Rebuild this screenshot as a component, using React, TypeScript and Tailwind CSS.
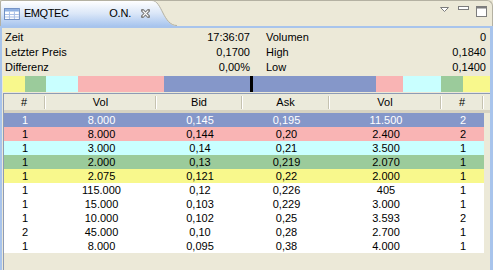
import React from "react";

type Row = {
  n1: string;
  vol1: string;
  bid: string;
  ask: string;
  vol2: string;
  n2: string;
  bg: string;
  text: string;
};

const rows: Row[] = [
  { n1: "1", vol1: "8.000", bid: "0,145", ask: "0,195", vol2: "11.500", n2: "2", bg: "bg-[#8597c9]", text: "text-white" },
  { n1: "1", vol1: "8.000", bid: "0,144", ask: "0,20", vol2: "2.400", n2: "2", bg: "bg-[#f9b4b4]", text: "text-black" },
  { n1: "1", vol1: "3.000", bid: "0,14", ask: "0,21", vol2: "3.500", n2: "1", bg: "bg-[#c9ffff]", text: "text-black" },
  { n1: "1", vol1: "2.000", bid: "0,13", ask: "0,219", vol2: "2.070", n2: "1", bg: "bg-[#9bcb9b]", text: "text-black" },
  { n1: "1", vol1: "2.075", bid: "0,121", ask: "0,22", vol2: "2.000", n2: "1", bg: "bg-[#f8f88c]", text: "text-black" },
  { n1: "1", vol1: "115.000", bid: "0,12", ask: "0,226", vol2: "405", n2: "1", bg: "bg-white", text: "text-black" },
  { n1: "1", vol1: "15.000", bid: "0,103", ask: "0,229", vol2: "3.000", n2: "1", bg: "bg-white", text: "text-black" },
  { n1: "1", vol1: "10.000", bid: "0,102", ask: "0,25", vol2: "3.593", n2: "2", bg: "bg-white", text: "text-black" },
  { n1: "2", vol1: "45.000", bid: "0,10", ask: "0,28", vol2: "2.700", n2: "1", bg: "bg-white", text: "text-black" },
  { n1: "1", vol1: "8.000", bid: "0,095", ask: "0,38", vol2: "4.000", n2: "1", bg: "bg-white", text: "text-black" },
];

// column widths in px: #, Vol, Bid, Ask, Vol, #
const cols = [
  { label: "#", w: "w-[42px]" },
  { label: "Vol", w: "w-[111px]" },
  { label: "Bid", w: "w-[86px]" },
  { label: "Ask", w: "w-[87px]" },
  { label: "Vol", w: "w-[112px]" },
  { label: "#", w: "w-[42px]" },
];

const info = [
  { l: "Zeit", lv: "17:36:07", r: "Volumen", rv: "0" },
  { l: "Letzter Preis", lv: "0,1700", r: "High", rv: "0,1840" },
  { l: "Differenz", lv: "0,00%", r: "Low", rv: "0,1400" },
];

const TableIcon = () => (
  <svg width="16" height="12" viewBox="0 0 16 12">
    <rect x="0.5" y="0.5" width="15" height="11" fill="#ffffff" stroke="#6f8fc4" />
    <rect x="1" y="1" width="14" height="2.5" fill="#8fb0e2" />
    <path d="M1 6.5H15M1 9H15M5.5 3.5V11M10.5 3.5V11" stroke="#a9c0e6" strokeWidth="1" />
  </svg>
);

const CloseIcon = () => (
  <svg width="9" height="9" viewBox="0 0 9 9">
    <path d="M1.5 1.5L7.5 7.5M7.5 1.5L1.5 7.5" stroke="#7d7d7d" strokeWidth="3.2" strokeLinecap="square" />
    <path d="M1.7 1.7L7.3 7.3M7.3 1.7L1.7 7.3" stroke="#ffffff" strokeWidth="1.2" />
  </svg>
);

export default function App() {
  return (
    <div className="w-[493px] h-[270px] bg-[#ece9d8] flex flex-col overflow-hidden font-['Liberation_Sans',Arial,sans-serif] text-[11px] text-black">
      {/* tab strip */}
      <div className="h-[26px] flex shrink-0">
        <div className="w-[150px] flex items-center pl-[3px] border-l border-t border-[#b4b1a2] rounded-tl-[2px] bg-gradient-to-b from-[#ffffff] via-[#dbe7f8] to-[#a8c5ee]">
          <TableIcon />
          <span className="ml-[4px] w-[86px] tracking-[-0.4px] text-[11px]">EMQTEC</span>
          <span className="tracking-[-0.2px]">O.N.</span>
          <span className="ml-[10px] flex">
            <CloseIcon />
          </span>
        </div>
        <svg width="27" height="26" viewBox="0 0 27 26" className="shrink-0">
          <defs>
            <linearGradient id="tabg" x1="0" y1="0" x2="0" y2="1">
              <stop offset="0" stopColor="#ffffff" />
              <stop offset="0.5" stopColor="#dbe7f8" />
              <stop offset="1" stopColor="#a8c5ee" />
            </linearGradient>
          </defs>
          <rect width="27" height="26" fill="#ece9d8" />
          <path d="M0 0 L2 0 C12 0 13 26 27 26 L0 26 Z" fill="url(#tabg)" />
          <path d="M0 0.5 L2 0.5 C12 0.5 13 25.5 27 25.5" fill="none" stroke="#b4b1a2" />
          <path d="M2 0.5 L27 0.5" stroke="#b4b1a2" />
        </svg>
        <div className="flex-1 border-t border-r border-[#b4b1a2] rounded-tr-[6px] flex justify-end items-start pt-[5px] pr-[5px]">
          <svg width="9" height="5" viewBox="0 0 9 5" className="mt-[1px]">
            <path d="M0.5 0.5H8.5L4.5 4.5Z" fill="#ffffff" stroke="#7c7c7c" />
          </svg>
          <svg width="11" height="4" viewBox="0 0 11 4" className="ml-[9px]">
            <rect x="0.5" y="0.5" width="10" height="3" fill="#ffffff" stroke="#7c7c7c" />
          </svg>
          <svg width="11" height="11" viewBox="0 0 11 11" className="ml-[7px]">
            <rect x="0.5" y="0.5" width="10" height="10" fill="#ffffff" stroke="#7c7c7c" />
            <rect x="0.5" y="0.5" width="10" height="2" fill="#7c7c7c" />
          </svg>
        </div>
      </div>

      {/* view body */}
      <div className="flex-1 flex flex-col border-t-[2px] border-l-[2px] border-r-[3px] border-[#a8c4ec]">
        <div className="pt-[2px]">
          {info.map((r) => (
            <div key={r.l} className="h-[15px] flex items-center">
              <div className="w-[248px] flex justify-between pl-[3px]">
                <span>{r.l}</span>
                <span>{r.lv}</span>
              </div>
              <div className="ml-[16px] flex-1 flex justify-between pr-[4px]">
                <span>{r.r}</span>
                <span>{r.rv}</span>
              </div>
            </div>
          ))}
        </div>

        {/* depth bar */}
        <div className="mt-[1px] ml-[1px] h-[16px] flex shrink-0">
          <div className="w-[22px] bg-[#f8f88c]" />
          <div className="w-[21px] bg-[#9bcb9b]" />
          <div className="w-[32px] bg-[#c9ffff]" />
          <div className="w-[86px] bg-[#f9b4b4]" />
          <div className="w-[86px] bg-[#8597c9]" />
          <div className="w-[3px] bg-black" />
          <div className="w-[123px] bg-[#8597c9]" />
          <div className="w-[27px] bg-[#f9b4b4]" />
          <div className="w-[38px] bg-[#c9ffff]" />
          <div className="w-[22px] bg-[#9bcb9b]" />
          <div className="w-[27px] bg-[#f8f88c]" />
        </div>

        {/* order book table */}
        <div className="mt-[1px] ml-[1px] flex-1 border-l border-t border-[#8d9bb5] flex flex-col">
          <div className="h-[19px] flex bg-[#ebeadb] border-b-[3px] border-[#d6d2c2] shrink-0">
            {cols.map((c, i) => (
              <div key={i} className={`${c.w} flex items-center`}>
                <span className="flex-1 text-center">{c.label}</span>
                <span className="w-[2px] h-[13px] border-l border-[#c5c2b0] border-r border-r-white" />
              </div>
            ))}
            <div className="flex-1" />
          </div>
          {rows.map((r, i) => (
            <div key={i} className={`w-[480px] h-[14px] flex items-center ${r.bg} ${r.text}`}>
              <span className="w-[42px] text-center">{r.n1}</span>
              <span className="w-[111px] text-center">{r.vol1}</span>
              <span className="w-[86px] text-center">{r.bid}</span>
              <span className="w-[87px] text-center">{r.ask}</span>
              <span className="w-[112px] text-center">{r.vol2}</span>
              <span className="w-[42px] text-center">{r.n2}</span>
            </div>
          ))}
        </div>
      </div>
    </div>
  );
}
